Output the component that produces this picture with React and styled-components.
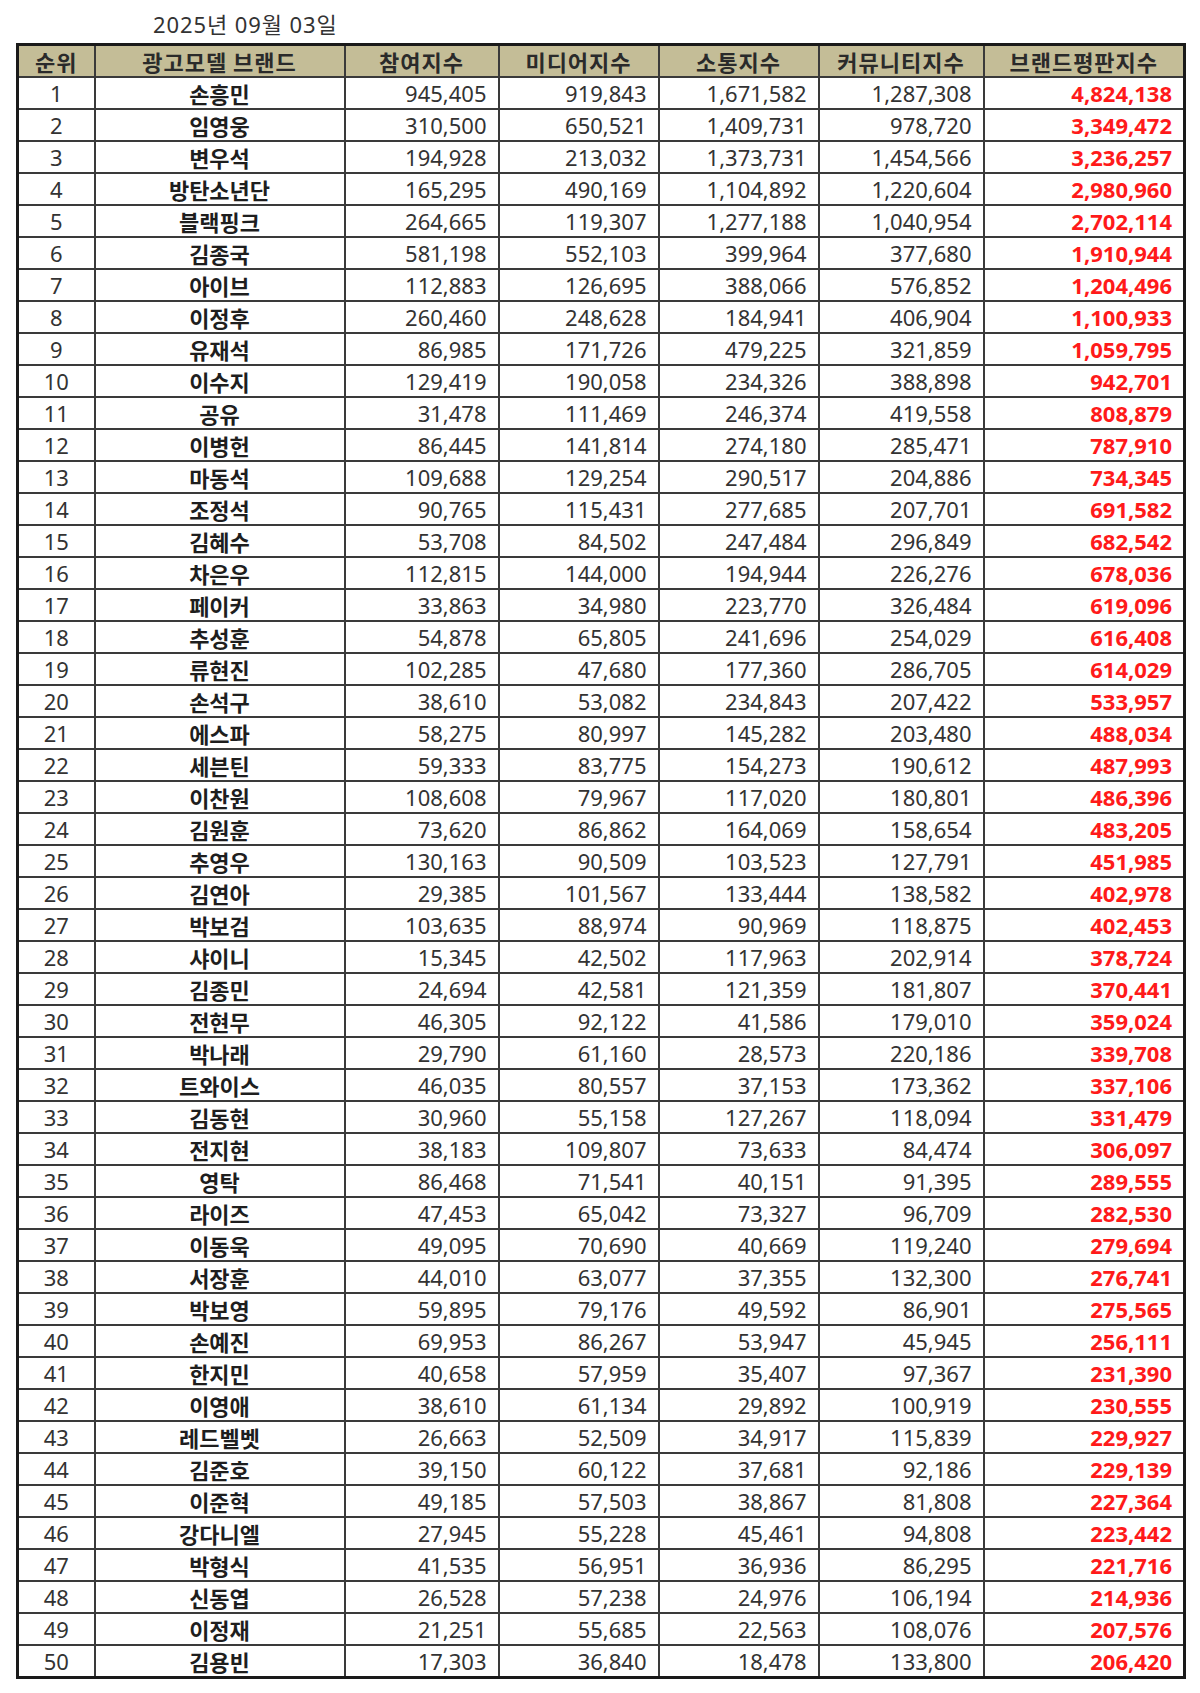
import React from "react";
import styled, { createGlobalStyle } from "styled-components";

const GlobalStyle = createGlobalStyle`
  html, body {
    margin: 0;
    padding: 0;
    background: #ffffff;
  }
  body {
    font-family: "Noto Sans", "Noto Sans CJK KR", sans-serif;
    color: #333;
  }
`;

// rank, name, 참여, 미디어, 소통, 커뮤니티, 브랜드평판
const RAW = `1 손흥민 945,405 919,843 1,671,582 1,287,308 4,824,138
2 임영웅 310,500 650,521 1,409,731 978,720 3,349,472
3 변우석 194,928 213,032 1,373,731 1,454,566 3,236,257
4 방탄소년단 165,295 490,169 1,104,892 1,220,604 2,980,960
5 블랙핑크 264,665 119,307 1,277,188 1,040,954 2,702,114
6 김종국 581,198 552,103 399,964 377,680 1,910,944
7 아이브 112,883 126,695 388,066 576,852 1,204,496
8 이정후 260,460 248,628 184,941 406,904 1,100,933
9 유재석 86,985 171,726 479,225 321,859 1,059,795
10 이수지 129,419 190,058 234,326 388,898 942,701
11 공유 31,478 111,469 246,374 419,558 808,879
12 이병헌 86,445 141,814 274,180 285,471 787,910
13 마동석 109,688 129,254 290,517 204,886 734,345
14 조정석 90,765 115,431 277,685 207,701 691,582
15 김혜수 53,708 84,502 247,484 296,849 682,542
16 차은우 112,815 144,000 194,944 226,276 678,036
17 페이커 33,863 34,980 223,770 326,484 619,096
18 추성훈 54,878 65,805 241,696 254,029 616,408
19 류현진 102,285 47,680 177,360 286,705 614,029
20 손석구 38,610 53,082 234,843 207,422 533,957
21 에스파 58,275 80,997 145,282 203,480 488,034
22 세븐틴 59,333 83,775 154,273 190,612 487,993
23 이찬원 108,608 79,967 117,020 180,801 486,396
24 김원훈 73,620 86,862 164,069 158,654 483,205
25 추영우 130,163 90,509 103,523 127,791 451,985
26 김연아 29,385 101,567 133,444 138,582 402,978
27 박보검 103,635 88,974 90,969 118,875 402,453
28 샤이니 15,345 42,502 117,963 202,914 378,724
29 김종민 24,694 42,581 121,359 181,807 370,441
30 전현무 46,305 92,122 41,586 179,010 359,024
31 박나래 29,790 61,160 28,573 220,186 339,708
32 트와이스 46,035 80,557 37,153 173,362 337,106
33 김동현 30,960 55,158 127,267 118,094 331,479
34 전지현 38,183 109,807 73,633 84,474 306,097
35 영탁 86,468 71,541 40,151 91,395 289,555
36 라이즈 47,453 65,042 73,327 96,709 282,530
37 이동욱 49,095 70,690 40,669 119,240 279,694
38 서장훈 44,010 63,077 37,355 132,300 276,741
39 박보영 59,895 79,176 49,592 86,901 275,565
40 손예진 69,953 86,267 53,947 45,945 256,111
41 한지민 40,658 57,959 35,407 97,367 231,390
42 이영애 38,610 61,134 29,892 100,919 230,555
43 레드벨벳 26,663 52,509 34,917 115,839 229,927
44 김준호 39,150 60,122 37,681 92,186 229,139
45 이준혁 49,185 57,503 38,867 81,808 227,364
46 강다니엘 27,945 55,228 45,461 94,808 223,442
47 박형식 41,535 56,951 36,936 86,295 221,716
48 신동엽 26,528 57,238 24,976 106,194 214,936
49 이정재 21,251 55,685 22,563 108,076 207,576
50 김용빈 17,303 36,840 18,478 133,800 206,420`;

const rows = RAW.split("\n").map((line) => line.trim().split(" "));

const columns = [
  { title: "순위", width: 77 },
  { title: "광고모델 브랜드", width: 250 },
  { title: "참여지수", width: 154 },
  { title: "미디어지수", width: 160 },
  { title: "소통지수", width: 160 },
  { title: "커뮤니티지수", width: 165 },
  { title: "브랜드평판지수", width: 201 },
];

const Page = styled.div`
  padding: 8px 0 0 16px;
`;

const DateLine = styled.div`
  margin-left: 137px;
  height: 35px;
  font-size: 22px;
  line-height: 32px;
  color: #333;
  letter-spacing: 0.9px;
  overflow: hidden;
`;

const Table = styled.table`
  border-collapse: collapse;
  table-layout: fixed;
  width: 1167px;
  border: 3px solid #1a1a1a;
  font-size: 22px;
`;

const HeadCell = styled.th`
  background: #c4bd97;
  color: #2a2a2a;
  font-family: "Noto Sans CJK KR", sans-serif;
  font-weight: 700;
  height: 29px;
  padding: 0 0 1px;
  border: 2px solid #3a3a3a;
  text-align: center;
  line-height: 26px;
  letter-spacing: 1px;
  white-space: nowrap;
`;

const Cell = styled.td`
  height: ${(p) => (p.$korean ? "29px" : "30px")};
  padding: 0 ${(p) => (p.$align === "right" ? "11px" : "0")}
    ${(p) => (p.$korean ? "1px" : "0")};
  border: 2px solid #3a3a3a;
  font-family: ${(p) =>
    p.$korean ? '"Noto Sans CJK KR", sans-serif' : '"Noto Sans", sans-serif'};
  text-align: ${(p) => p.$align || "center"};
  font-weight: ${(p) => (p.$bold ? 700 : 400)};
  color: ${(p) => (p.$red ? "#ff1a1a" : p.$bold ? "#1e1e1e" : "#333")};
  line-height: 26px;
  white-space: nowrap;
`;

export default function App() {
  return (
    <>
      <GlobalStyle />
      <Page>
        <DateLine>2025년 09월 03일</DateLine>
        <Table>
          <colgroup>
            {columns.map((c) => (
              <col key={c.title} style={{ width: c.width }} />
            ))}
          </colgroup>
          <thead>
            <tr>
              {columns.map((c) => (
                <HeadCell key={c.title}>{c.title}</HeadCell>
              ))}
            </tr>
          </thead>
          <tbody>
            {rows.map(([rank, name, join, media, talk, community, total]) => (
              <tr key={rank}>
                <Cell>{rank}</Cell>
                <Cell $bold $korean>
                  {name}
                </Cell>
                <Cell $align="right">{join}</Cell>
                <Cell $align="right">{media}</Cell>
                <Cell $align="right">{talk}</Cell>
                <Cell $align="right">{community}</Cell>
                <Cell $align="right" $bold $red>
                  {total}
                </Cell>
              </tr>
            ))}
          </tbody>
        </Table>
      </Page>
    </>
  );
}
